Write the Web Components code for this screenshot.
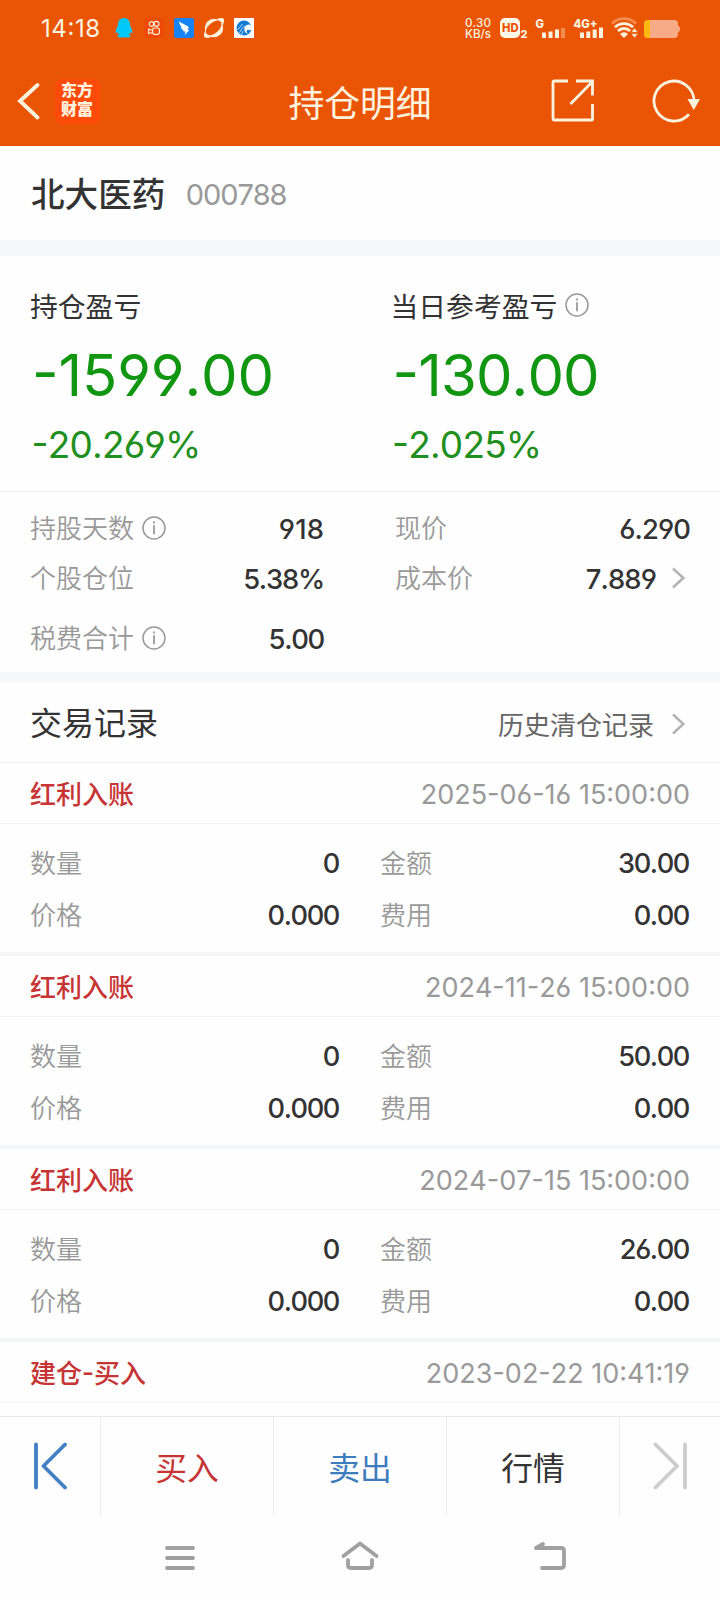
<!DOCTYPE html>
<html lang="zh-CN">
<head>
<meta charset="utf-8">
<meta name="viewport" content="width=device-width">
<title>持仓明细</title>
<style>
    body {
        margin: 0;
        width: 720px;
        height: 1600px;
        overflow: hidden;
        display: flex;
        flex-direction: column;
        background: #fefefe;
        color: #333;
        font-family: Inter, "Noto Sans CJK SC", sans-serif;
        font-kerning: none;
        font-feature-settings: "case", "cv03", "cv04";
    }
    trade-list {
        flex: 1;
    }
</style>
</head>
<body>
<status-bar time="14:18"></status-bar>
<title-bar>持仓明细</title-bar>
<stock-name code="000788">北大医药</stock-name>
<profit-panel>
    <profit-item label="持仓盈亏" amount="-1599.00" percent="-20.269%" style="--tracking: -0.1px"></profit-item>
    <profit-item label="当日参考盈亏" amount="-130.00" percent="-2.025%" info></profit-item>
</profit-panel>
<position-detail>
    <detail-item label="持股天数" value="918" style="--tracking: 0.1px" info></detail-item>
    <detail-item label="现价" value="6.290"></detail-item>
    <detail-item label="个股仓位" value="5.38%" style="--tracking: -1.2px"></detail-item>
    <detail-item label="成本价" value="7.889" arrow></detail-item>
    <detail-item class="last" label="税费合计" value="5.00" style="--tracking: -1.3px" info></detail-item>
</position-detail>
<section-title more="历史清仓记录">交易记录</section-title>
<trade-list></trade-list>
<action-bar></action-bar>
<nav-bar></nav-bar>

<script>
const infoIcon = `<svg class="info" width="24" height="24" viewBox="0 0 24 24" fill="none" stroke="#999" stroke-width="1.5">
    <circle cx="12" cy="12" r="11"/><path d="M12 9.3V18.300" stroke-width="1.8"/><path d="M12 5.400v2" stroke-width="1.8"/></svg>`;
const arrowIcon = `<svg class="arrow" width="16" height="24" viewBox="0 0 16 24" fill="none" stroke="#b4b4b4" stroke-width="2.6">
    <path d="M2 2.5L12.3 12L2 21.5"/></svg>`;

class StatusBar extends HTMLElement {
    constructor() {
        super();
        this.attachShadow({mode: 'open'});
    }

    connectedCallback() {
        this.shadowRoot.innerHTML = `
            <style>
                :host {
                    display: flex;
                    justify-content: space-between;
                    height: 56px;
                    box-sizing: border-box;
                    padding: 18px 40px 0 41px;
                    background: #e95504;
                    color: #fff3e0;
                }
                .left { display: flex; gap: 10px; }
                .time { width: 64px; font-size: 24px; line-height: 21px; letter-spacing: 0.6px; }
                .right { display: flex; }
                .speed { width: 34px; font-size: 11.6px; font-weight: 500; line-height: 10.5px; text-align: center; margin-left: -4px; }
                svg { display: block; }
                text { font-family: Inter, sans-serif; font-weight: 800; }
            </style>
            <div class="left">
                <span class="time">${this.getAttribute('time')}</span>
                <svg width="20" height="20" viewBox="0 0 20 20" style="margin-left:-1px"><path fill="#00c8fa" d="M10 0C5.800 0 4 3 4 6.500c0 1-.3 1.800-1 3C2 11 1.400 13 1.700 15c.3.600 1.200 0 1.900-1 .2 1.100.7 2 1.500 2.800-1 .5-1.600 1-1.600 1.800C3.500 19.700 9 20 10 18.900c1 1.100 6.500.8 6.500-.3 0-.8-.6-1.300-1.600-1.800.8-.8 1.300-1.700 1.500-2.800.7 1 1.600 1.600 1.900 1 .3-2-.3-4-1.300-5.500-.7-1.200-1-2-1-3C16 3 14.200 0 10 0z"/></svg>
                <svg width="20" height="20" viewBox="0 0 20 20"><rect width="20" height="20" rx="4" fill="#ef4a08"/><g fill="none" stroke="#fff0e0" stroke-width="1.200"><circle cx="7.500" cy="6" r="2.300"/><circle cx="12.500" cy="5.800" r="2.500"/><rect x="8.700" y="10" width="6.600" height="6.400" rx="1.600"/><path d="M8.600 12.200L4.700 11v4.500l3.900-1"/></g></svg>
                <svg width="20" height="20" viewBox="0 0 20 20"><rect width="20" height="20" rx="2" fill="#1684f5"/><path fill="#fff" d="M5 3.500l8.800 4.700c1.200.8.9 2-.1 3.800h1.600l-4.700 5 .8-3.300-2.800-1 1-.8c-1.500-.5-2.600-1.400-3-2.400l1.600.1C6.600 8.500 5.400 6.500 5 3.500z"/></svg>
                <svg width="20" height="20" viewBox="0 0 20 20"><circle cx="10" cy="10" r="9.200" fill="#fff0dc"/><path fill="#fff0dc" d="M13 1c3-1.200 6-1.400 7 .2.300 2.500-.6 5-2 7.500zM7 19c-3 1.200-6 1.400-7-.2-.3-2.500.6-5 2-7.500z"/><ellipse cx="9.700" cy="9.900" rx="9.300" ry="5.300" transform="rotate(-42 9.700 9.900)" fill="#e95504"/></svg>
                <svg width="20" height="20" viewBox="0 0 20 20"><rect width="20" height="20" fill="#fff"/><circle cx="10" cy="10" r="7.500" fill="#1479d3"/><path d="M3.500 12l5-6M5 15.500L8.500 10l3-2.500M7.500 17l1.500-4" fill="none" stroke="#fff" stroke-width=".7"/><path d="M10.500 9.500c1-2 3-3.500 5-3l3 2.500v3.500l-3.500-.5c-1.500-.5-2.500.5-2.500 2l1.500 1.500-1.500-.3c-2-.7-2.500-3.200-2-5.700z" fill="#fff"/></svg>
            </div>
            <div class="right">
                <div class="speed">0.30<br>KB/s</div>
                <svg width="185" height="30" viewBox="0 -8 185 30" style="margin-top:-8px">
                    <rect x="5" y="0" width="20" height="20" rx="5" fill="#fff8e8"/>
                    <text x="7" y="14.200" font-size="12" fill="#e95504" textLength="16.500" lengthAdjust="spacingAndGlyphs">HD</text>
                    <text x="25.500" y="19.500" font-size="11" fill="#fff3e0">2</text>
                    <g fill="#fff3e0">
                        <text x="40.500" y="9.500" font-size="12" textLength="8.500" lengthAdjust="spacingAndGlyphs">G</text>
                        <path d="M47 14.500h4V20h-4zM53.500 13.500h4V20h-4zM60 11.500h4V20h-4z"/>
                        <path d="M66 10h4v10h-4z" opacity=".35"/>
                        <text x="78.500" y="9.500" font-size="12" textLength="24" lengthAdjust="spacingAndGlyphs">4G+</text>
                        <path d="M85 14.500h4V20h-4zM91.300 13.500h4V20h-4zM97.700 11.500h4V20h-4zM104 9.500h4V20h-4z"/>
                        <path d="M129 20l-4-4a5.700 5.700 0 0 1 8 0z"/>
                    </g>
                    <g fill="none" stroke="#fff3e0" stroke-width="2.800">
                        <path d="M117 5.500a17 17 0 0 1 24 0" opacity=".35"/>
                        <path d="M120 9.300a13 13 0 0 1 18 0"/>
                        <path d="M123 13a8.500 8.500 0 0 1 12 0"/>
                    </g>
                    <path d="M139.500 10l3.500 4.300h-7zM139.500 20l3.500-4.300h-7z" fill="#fff3e0" stroke="#e95504" stroke-width=".6"/>
                    <rect x="149" y="2" width="34" height="18" rx="4" fill="#f7ac87"/>
                    <path d="M183 8q2 0 2 3t-2 3z" fill="#f7ac87"/>
                    <path d="M155 2h-2q-4 0-4 4v10q0 4 4 4h2z" fill="#ffb810"/>
                </svg>
            </div>
        `;
    }
}
customElements.define('status-bar', StatusBar);

class TitleBar extends HTMLElement {
    constructor() {
        super();
        this.attachShadow({mode: 'open'}).innerHTML = `
            <style>
                :host {
                    display: grid;
                    grid-template-columns: 1fr auto 1fr;
                    align-items: center;
                    height: 90px;
                    background: #e95504;
                    color: #fff3e0;
                }
                .left { display: flex; align-items: center; padding-left: 16px; gap: 15px; }
                .logo {
                    width: 45px;
                    height: 45px;
                    box-sizing: border-box;
                    padding: 2px 0 0 6px;
                    border-radius: 8px;
                    background: #ff4a08;
                    font-size: 16px;
                    font-weight: 900;
                    line-height: 19px;
                }
                h1 { margin: 6px 0 0; font-size: 35.800px; font-weight: 400; line-height: 50px; }
                .right { display: flex; align-items: center; justify-content: flex-end; gap: 58px; padding-right: 18px; }
                svg { display: block; fill: none; stroke: #fff3e0; stroke-width: 2.8; }
            </style>
            <div class="left">
                <svg width="24" height="40" viewBox="0 0 24 40" stroke-linecap="round" style="stroke-width:3.800"><path d="M21.500 4L4 20L21.500 36.500"/></svg>
                <div class="logo">东方<br>财富</div>
            </div>
            <h1><slot></slot></h1>
            <div class="right">
                <svg width="44" height="44" viewBox="0 0 44 44">
                    <path d="M18 2H4.500Q3 2 3 3.500V39.500Q3 41 4.500 41H41.500Q43 41 42.500 39.500V25M26 2H42.500V16.500M20.500 25L42 3"/>
                </svg>
                <svg width="50" height="44" viewBox="0 0 50 44">
                    <path d="M42 22A20 20 0 1 0 37 35.300"/>
                    <path d="M35.500 20H48L41.800 31Z" fill="#fff3e0" stroke="none"/>
                </svg>
            </div>
        `;
    }
}
customElements.define('title-bar', TitleBar);

class StockName extends HTMLElement {
    constructor() {
        super();
        this.attachShadow({mode: 'open'});
    }

    connectedCallback() {
        this.shadowRoot.innerHTML = `
            <style>
                :host {
                    display: flex;
                    align-items: center;
                    height: 110px;
                    box-sizing: border-box;
                    padding: 4px 30px 0 31px;
                    border-bottom: 16px solid #f6f7fa;
                    gap: 20.5px;
                    line-height: 40px;
                }
                .name { font-size: 33.6px; font-weight: 500; }
                .code { font-size: 29px; color: #999; letter-spacing: -1.1px; }
            </style>
            <span class="name"><slot></slot></span>
            <span class="code">${this.getAttribute('code')}</span>
        `;
    }
}
customElements.define('stock-name', StockName);

class ProfitPanel extends HTMLElement {
    constructor() {
        super();
        this.attachShadow({mode: 'open'}).innerHTML = `
            <style>
                :host {
                    display: grid;
                    grid-template-columns: 360.5px 1fr;
                    height: 236px;
                    box-sizing: border-box;
                    padding: 29px 0 0 30px;
                    border-bottom: 1px solid #f2f2f2;
                }
            </style>
            <slot></slot>
        `;
    }
}
customElements.define('profit-panel', ProfitPanel);

class ProfitItem extends HTMLElement {
    constructor() {
        super();
        this.attachShadow({mode: 'open'});
    }

    connectedCallback() {
        this.shadowRoot.innerHTML = `
            <style>
                :host { display: block; }
                .label { display: flex; align-items: center; height: 40px; gap: 8px; font-size: 27.8px; }
                .amount { font-size: 58px; line-height: 70px; margin: 15px 0 0 2px; color: #119611; letter-spacing: var(--tracking, -0.9px); }
                .percent { font-size: 37px; line-height: 50px; margin: 10px 0 0 1.5px; color: #1f8f20; letter-spacing: -0.8px; }
            </style>
            <div class="label">${this.getAttribute('label')}${this.hasAttribute('info') ? infoIcon : ''}</div>
            <div class="amount">${this.getAttribute('amount')}</div>
            <div class="percent">${this.getAttribute('percent')}</div>
        `;
    }
}
customElements.define('profit-item', ProfitItem);

class PositionDetail extends HTMLElement {
    constructor() {
        super();
        this.attachShadow({mode: 'open'}).innerHTML = `
            <style>
                :host {
                    display: grid;
                    grid-template-columns: 294px 295px;
                    column-gap: 71px;
                    grid-template-rows: 50px 50px 70px;
                    height: 190px;
                    box-sizing: border-box;
                    padding: 12px 0 0 30px;
                    border-bottom: 10px solid #f6f7fa;
                }
                ::slotted(.last) { padding-top: 10px; }
            </style>
            <slot></slot>
        `;
    }
}
customElements.define('position-detail', PositionDetail);

class DetailItem extends HTMLElement {
    constructor() {
        super();
        this.attachShadow({mode: 'open'});
    }

    connectedCallback() {
        this.shadowRoot.innerHTML = `
            <style>
                :host { display: flex; align-items: center; height: 50px; font-size: 26px; line-height: 40px; box-sizing: content-box; }
                .label { display: flex; align-items: center; gap: 8px; color: #999; font-weight: 350; }
                .value { margin-left: auto; font-size: 27.4px; font-weight: 500; letter-spacing: var(--tracking, -0.9px); }
                .arrow { margin: 0 3px 3px 15px; }
                .info { margin-bottom: 3px; }
            </style>
            <span class="label">${this.getAttribute('label')}${this.hasAttribute('info') ? infoIcon : ''}</span>
            <span class="value">${this.getAttribute('value')}</span>
            ${this.hasAttribute('arrow') ? arrowIcon : ''}
        `;
    }
}
customElements.define('detail-item', DetailItem);

class SectionTitle extends HTMLElement {
    constructor() {
        super();
        this.attachShadow({mode: 'open'});
    }

    connectedCallback() {
        this.shadowRoot.innerHTML = `
            <style>
                :host {
                    display: flex;
                    align-items: center;
                    height: 81px;
                    box-sizing: border-box;
                    padding: 4px 33px 0 30px;
                    border-bottom: 1px solid #f2f2f2;
                    line-height: 40px;
                }
                .title { font-size: 32px; }
                .more { margin: 3px 17px 0 auto; font-size: 26px; color: #666; }
            </style>
            <span class="title"><slot></slot></span>
            <span class="more">${this.getAttribute('more')}</span>
            ${arrowIcon}
        `;
    }
}
customElements.define('section-title', SectionTitle);

class TradeRecord extends HTMLElement {
    constructor() {
        super();
        this.attachShadow({mode: 'open'});
    }

    set record(record) {
        this._record = record;
        this.render();
    }

    render() {
        const r = this._record;
        this.shadowRoot.innerHTML = `
            <style>
                :host { display: block; height: 193px; font-size: 26px; line-height: 40px; }
                .head {
                    display: flex;
                    align-items: center;
                    justify-content: space-between;
                    height: 61px;
                    box-sizing: border-box;
                    padding: 4px 30px 0;
                    border-bottom: 1px solid #f3f3f3;
                }
                .type { color: #c63434; font-weight: 500; }
                .date { font-size: 27px; color: #999; letter-spacing: 0; }
                .body {
                    display: grid;
                    grid-template-columns: 309px 309px;
                    grid-auto-rows: 52px;
                    column-gap: 41px;
                    height: 132px;
                    box-sizing: border-box;
                    padding: 14px 0 0 30px;
                    border-bottom: 4px solid #f5f6f8;
                }
                .cell { display: flex; align-items: center; justify-content: space-between; }
                .cell span { color: #999; font-weight: 350; }
                .cell b { font-size: 27.2px; font-weight: 500; letter-spacing: -1.4px; }
            </style>
            <div class="head">
                <span class="type">${r.type}</span>
                <span class="date">${r.date}</span>
            </div>
            <div class="body">
                <div class="cell"><span>数量</span><b>${r.count}</b></div>
                <div class="cell"><span>金额</span><b>${r.money}</b></div>
                <div class="cell"><span>价格</span><b>${r.price}</b></div>
                <div class="cell"><span>费用</span><b>${r.fee}</b></div>
            </div>
        `;
        if (r.money === undefined) {
            this.shadowRoot.querySelector('.body').remove();
        }
    }
}
customElements.define('trade-record', TradeRecord);

class TradeList extends HTMLElement {
    constructor() {
        super();
        this.attachShadow({mode: 'open'}).innerHTML = `
            <style>
                :host { display: block; min-height: 0; overflow: hidden; }
            </style>
        `;
        const records = [
            {type: '红利入账', date: '2025-06-16 15:00:00', count: '0', money: '30.00', price: '0.000', fee: '0.00'},
            {type: '红利入账', date: '2024-11-26 15:00:00', count: '0', money: '50.00', price: '0.000', fee: '0.00'},
            {type: '红利入账', date: '2024-07-15 15:00:00', count: '0', money: '26.00', price: '0.000', fee: '0.00'},
            {type: '建仓-买入', date: '2023-02-22 10:41:19'},
        ];
        records.forEach(record => {
            const item = document.createElement('trade-record');
            item.record = record;
            this.shadowRoot.appendChild(item);
        });
    }
}
customElements.define('trade-list', TradeList);

class ActionBar extends HTMLElement {
    constructor() {
        super();
        this.attachShadow({mode: 'open'}).innerHTML = `
            <style>
                :host {
                    display: grid;
                    grid-template-columns: 101px 173px 173px 173px 1fr;
                    height: 100px;
                    box-sizing: border-box;
                    border-top: 1px solid #e8e8e8;
                    font-size: 31.8px;
                    line-height: 40px;
                }
                div { display: flex; align-items: center; justify-content: center; border-right: 1px solid #ebebeb; padding-top: 4px; }
                div:last-child { border: 0; }
                .buy { color: #c63434; }
                .sell { color: #3d7cbd; }
                svg { fill: none; stroke-width: 3.8; stroke-linecap: round; stroke-linejoin: round; margin-bottom: 6px; }
            </style>
            <div><svg width="36" height="48" viewBox="0 0 36 48" stroke="#437fc4"><path d="M4 2.500V45.500M33 2.500L11.500 24L33 45.500"/></svg></div>
            <div class="buy">买入</div>
            <div class="sell">卖出</div>
            <div>行情</div>
            <div><svg width="36" height="48" viewBox="0 0 36 48" stroke="#ccc"><path d="M33 2.500V45.500M3.500 2.500L25 24L3.500 45.500"/></svg></div>
        `;
    }
}
customElements.define('action-bar', ActionBar);

class NavBar extends HTMLElement {
    constructor() {
        super();
        this.attachShadow({mode: 'open'}).innerHTML = `
            <style>
                :host { display: flex; gap: 140px; height: 84px; box-sizing: border-box; padding: 22px 0 0 160px; }
                svg { fill: none; stroke: #a0a0a0; stroke-width: 3.8; stroke-linecap: round; stroke-linejoin: round; }
                svg:last-child { margin-left: 9px; }
            </style>
            <svg width="40" height="36" viewBox="0 0 40 36"><path d="M7 10H33M7 20H33M7 30H33"/></svg>
            <svg width="40" height="36" viewBox="0 0 40 36"><path d="M3.500 18L20 5.500L36.500 18M8 22V27Q8 30 11 30H29Q32 30 32 27V22"/></svg>
            <svg width="40" height="36" viewBox="0 0 40 36"><path d="M14 6L7 10H32Q35 10 35 13V27Q35 30 32 30H13"/></svg>
        `;
    }
}
customElements.define('nav-bar', NavBar);
</script>
</body>
</html>
